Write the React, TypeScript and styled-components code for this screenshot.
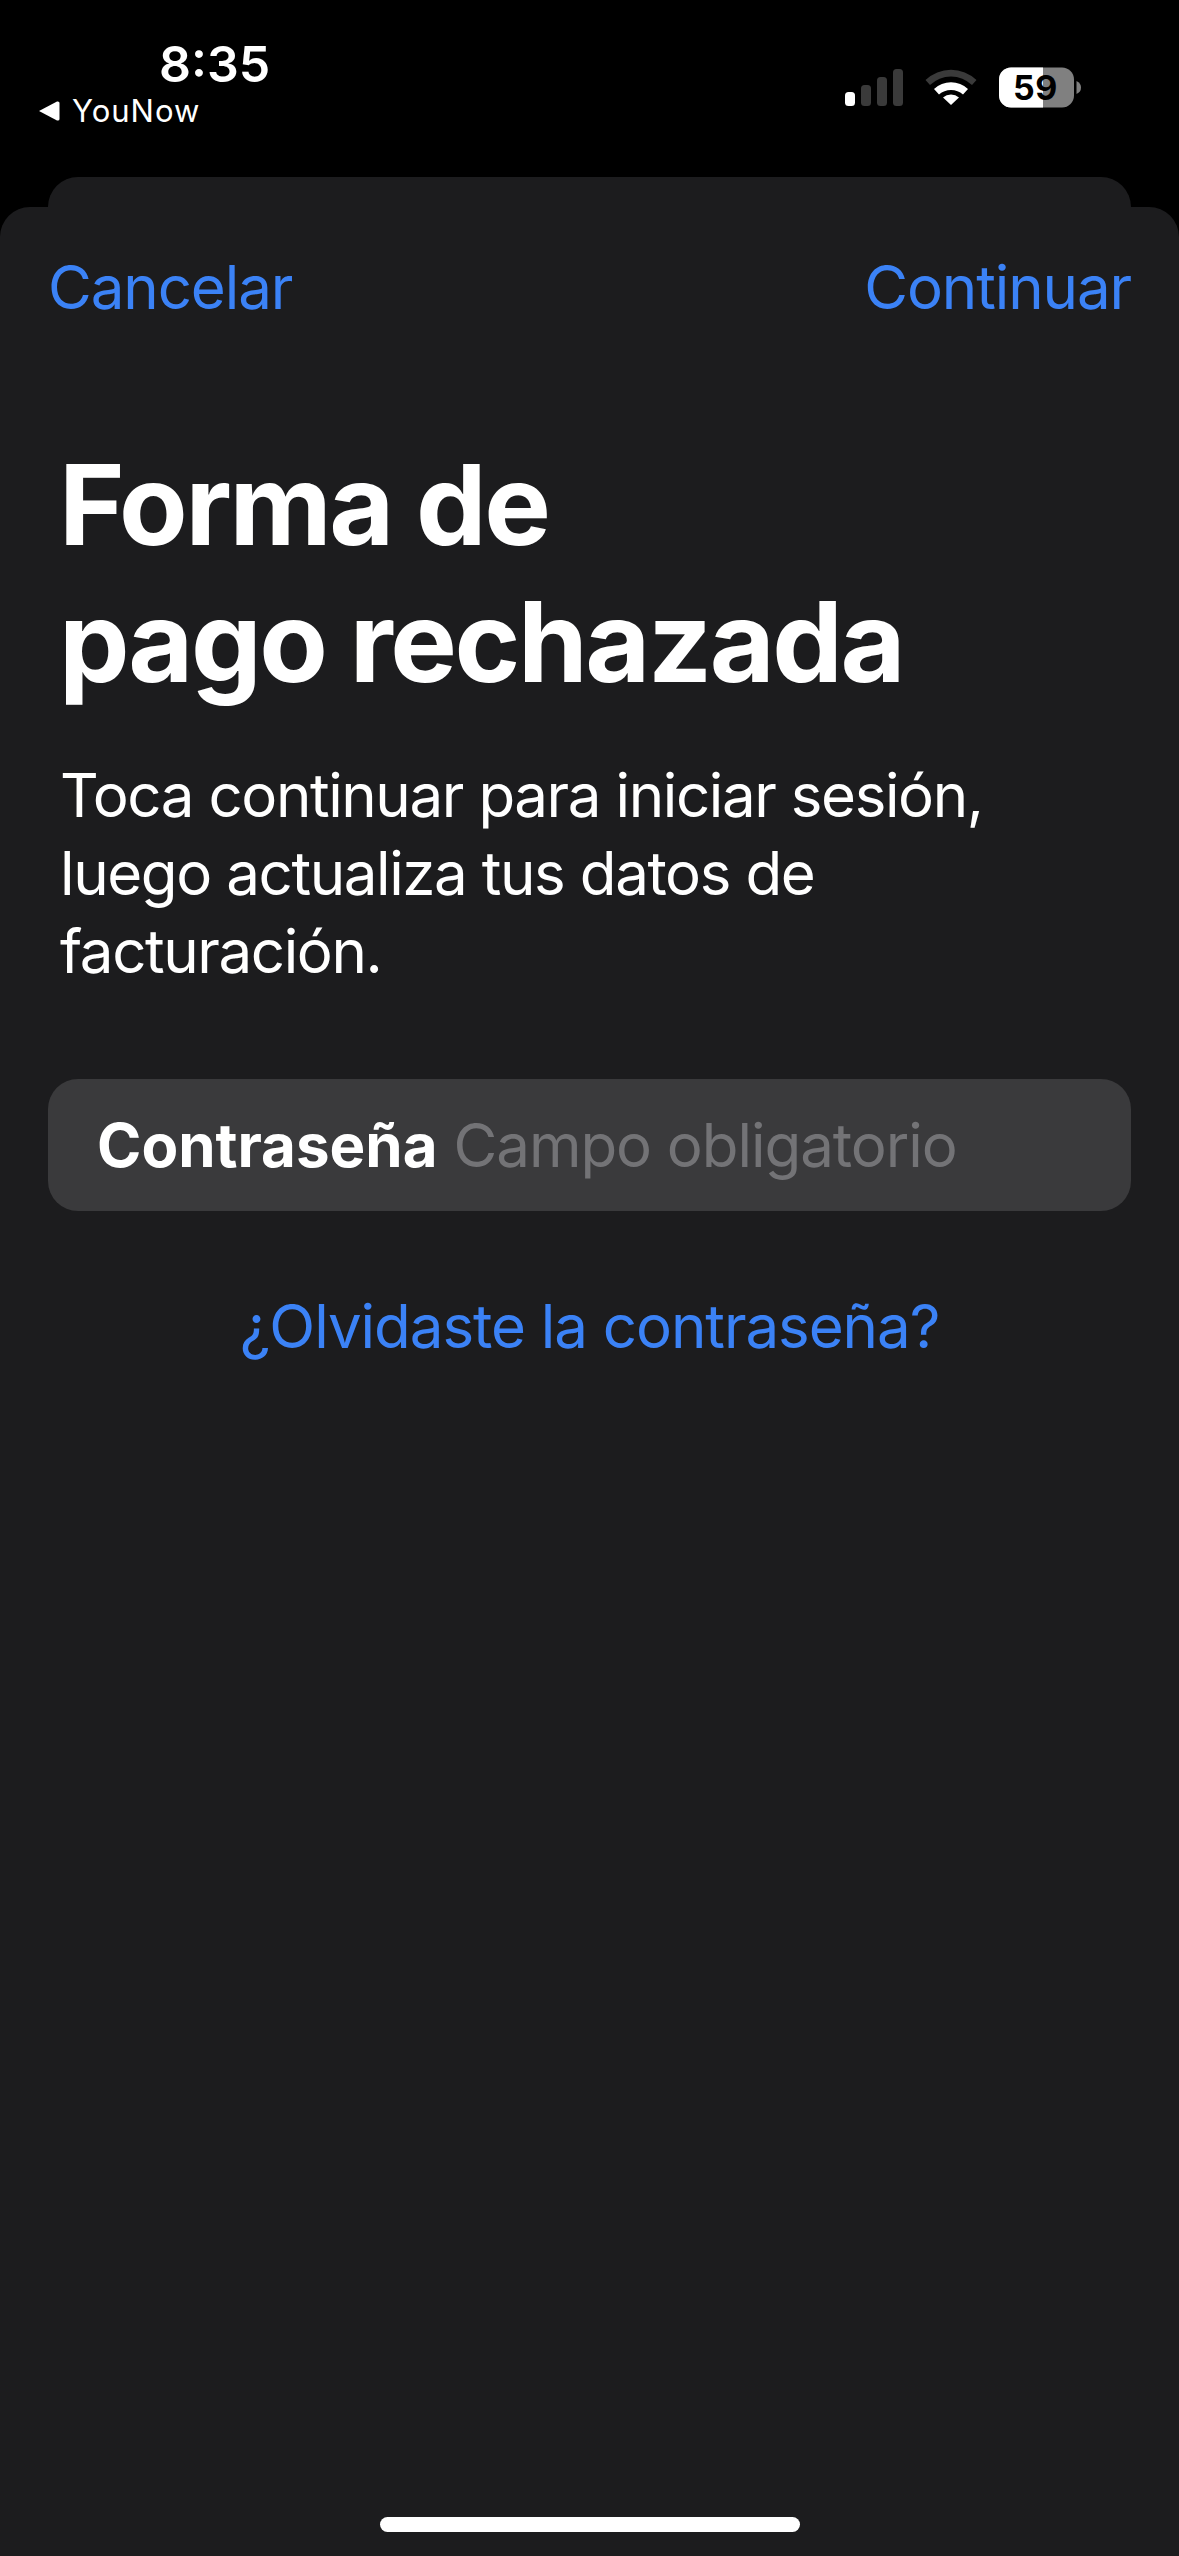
import React from "react";
import styled, { createGlobalStyle } from "styled-components";

const Global = createGlobalStyle`
  html, body { margin: 0; padding: 0; background: #000; }
  * { box-sizing: border-box; }
  body { font-family: Inter, "Liberation Sans", sans-serif; -webkit-font-smoothing: antialiased; }
`;

const Screen = styled.div`
  width: 1179px;
  height: 2556px;
  background: #000;
  display: flex;
  flex-direction: column;
  overflow: hidden;
`;

const StatusBar = styled.header`
  height: 177px;
  display: flex;
  justify-content: space-between;
  align-items: flex-start;
  padding: 0 98px 0 38px;
  color: #fff;
`;

const StatusLeft = styled.div`
  display: flex;
  flex-direction: column;
  align-items: flex-start;
`;

const Time = styled.div`
  margin: 36px 0 0 121px;
  font-size: 50px;
  line-height: 56px;
  font-weight: 600;
  letter-spacing: 0;
`;

const BackLink = styled.div`
  display: flex;
  align-items: center;
  gap: 12px;
  font-size: 31px;
  line-height: 38px;
  font-weight: 400;
  letter-spacing: 1px;
`;

const StatusIcons = styled.div`
  display: flex;
  align-items: flex-start;
  margin-top: 67px;
`;

const SignalIcon = styled.svg`
  margin: 2px 22px 0 0;
`;

const WifiIcon = styled.svg`
  margin-right: 22px;
`;

const SheetBack = styled.div`
  height: 30px;
  margin: 0 48px;
  background: #1c1c1e;
  border-radius: 30px 30px 0 0;
  flex: none;
`;

const Sheet = styled.main`
  flex: 1;
  background: #1c1c1e;
  border-radius: 30px 30px 0 0;
  display: flex;
  flex-direction: column;
  padding: 0 48px;
  color: #fff;
`;

const NavRow = styled.nav`
  display: flex;
  justify-content: space-between;
  margin-top: 44px;
`;

const NavLink = styled.span`
  font-size: 60px;
  line-height: 72px;
  color: #3b82f6;
  letter-spacing: -1.1px;
`;

const Title = styled.h1`
  margin: 113px 0 0 11px;
  font-size: 112px;
  line-height: 137px;
  font-weight: 700;
  letter-spacing: -2.4px;
`;

const Body = styled.p`
  margin: 46px 0 0 12px;
  font-size: 60px;
  line-height: 78px;
  font-weight: 400;
  letter-spacing: -1.4px;
`;

const Field = styled.div`
  margin-top: 89px;
  height: 132px;
  border-radius: 30px;
  background: #3a3a3c;
  display: flex;
  align-items: center;
  padding: 0 49px;
  gap: 16px;
  font-size: 60px;
`;

const FieldLabel = styled.span`
  font-weight: 700;
  color: #fff;
  letter-spacing: 0;
`;

const FieldHint = styled.span`
  color: #737376;
  letter-spacing: -1.05px;
`;

const Forgot = styled.div`
  margin-top: 79px;
  text-align: center;
  font-size: 60px;
  line-height: 72px;
  color: #3b82f6;
  letter-spacing: -1.05px;
`;

const HomeBar = styled.div`
  margin: auto auto 24px;
  width: 420px;
  height: 15px;
  border-radius: 8px;
  background: #fff;
`;

const Triangle = () => (
  <svg width="22" height="20" viewBox="0 0 22 20">
    <path d="M1 10 L19 0.5 Q21.5 0 21.5 2 L21.5 18 Q21.5 20 19 19.5 Z" fill="#fff" />
  </svg>
);

const Signal = () => (
  <SignalIcon width="58" height="37" viewBox="0 0 58 37">
    <rect x="0" y="23" width="10" height="14" rx="3.500" fill="#fff" />
    <rect x="16" y="16" width="10" height="21" rx="3.500" fill="#3a3a3a" />
    <rect x="32" y="8" width="10" height="29" rx="3.500" fill="#3a3a3a" />
    <rect x="48" y="0" width="10" height="37" rx="3.500" fill="#3a3a3a" />
  </SignalIcon>
);

const Wifi = () => (
  <WifiIcon width="52" height="40" viewBox="0 0 52 40">
    <path d="M0.5 13 A37 37 0 0 1 51.500 13 L47 18 A30 30 0 0 0 5 18 Z" fill="#3a3a3a" />
    <path d="M9 22 A25 25 0 0 1 43 22 L38 27.500 A18 18 0 0 0 14 27.500 Z" fill="#fff" />
    <path d="M18 30.500 A12 12 0 0 1 34 30.500 L26 38 Z" fill="#fff" />
  </WifiIcon>
);

const Battery = () => (
  <svg width="82" height="42" viewBox="0 0 82 42">
    <defs>
      <clipPath id="batt-fill">
        <rect x="0" y="0" width="44" height="42" />
      </clipPath>
    </defs>
    <rect x="0" y="0.500" width="75" height="40" rx="12" fill="#808080" />
    <rect x="0" y="0.500" width="75" height="40" rx="12" fill="#fff" clipPath="url(#batt-fill)" />
    <path d="M77.500 14 Q82 16 82 20.500 Q82 25 77.500 27 Z" fill="#808080" />
    <text x="36.500" y="32.500" textAnchor="middle" fontFamily="Inter, sans-serif" fontWeight="700" fontSize="34" fill="#000" letterSpacing="0.5">
      59
    </text>
  </svg>
);

export default function App() {
  return (
    <Screen>
      <Global />
      <StatusBar>
        <StatusLeft>
          <Time>8:35</Time>
          <BackLink>
            <Triangle />
            YouNow
          </BackLink>
        </StatusLeft>
        <StatusIcons>
          <Signal />
          <Wifi />
          <Battery />
        </StatusIcons>
      </StatusBar>
      <SheetBack />
      <Sheet>
        <NavRow>
          <NavLink>Cancelar</NavLink>
          <NavLink>Continuar</NavLink>
        </NavRow>
        <Title>
          Forma de
          <br />
          pago rechazada
        </Title>
        <Body>
          Toca continuar para iniciar sesión,
          <br />
          luego actualiza tus datos de
          <br />
          facturación.
        </Body>
        <Field>
          <FieldLabel>Contraseña</FieldLabel>
          <FieldHint>Campo obligatorio</FieldHint>
        </Field>
        <Forgot>¿Olvidaste la contraseña?</Forgot>
        <HomeBar />
      </Sheet>
    </Screen>
  );
}
